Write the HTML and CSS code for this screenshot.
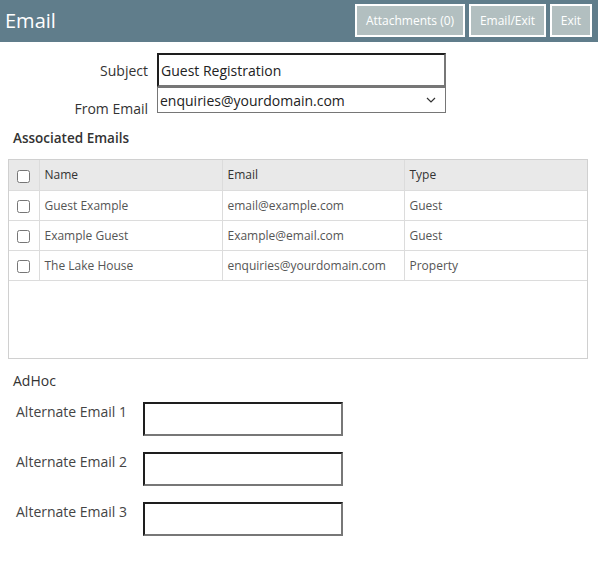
FILE: index.html
```html
<!DOCTYPE html>
<html lang="en">
<head>
    <meta charset="UTF-8">
    <meta name="viewport" content="width=device-width, initial-scale=1.0">
    <title>Email</title>
    <link rel="stylesheet" href="styles.css">
</head>
<body>
    <header class="topbar">
        <h1 class="title">Email</h1>
        <div class="actions">
            <button class="btn btn-attach">Attachments (0)</button>
            <button class="btn btn-send">Email/Exit</button>
            <button class="btn btn-exit">Exit</button>
        </div>
    </header>

    <form class="email-form">
        <div class="field-grid">
            <label class="field-label" for="subject">Subject</label>
            <input type="text" id="subject" class="text-input subject-input" value="Guest Registration">

            <label class="field-label from-label" for="from-email">From Email</label>
            <div class="select-wrap">
                <select id="from-email" class="select-input">
                    <option>enquiries@yourdomain.com</option>
                </select>
                <svg class="chevron" width="10" height="6" viewBox="0 0 10 6">
                    <path d="M1 1 L5 5 L9 1" fill="none" stroke="#333" stroke-width="1.2"/>
                </svg>
            </div>
        </div>

        <h2 class="section-title">Associated Emails</h2>
        <div class="grid-box">
            <table class="email-table">
                <thead>
                    <tr>
                        <th class="col-check"><input type="checkbox"></th>
                        <th class="col-name">Name</th>
                        <th class="col-email">Email</th>
                        <th>Type</th>
                    </tr>
                </thead>
                <tbody>
                    <tr>
                        <td class="col-check"><input type="checkbox"></td>
                        <td>Guest Example</td>
                        <td>email@example.com</td>
                        <td>Guest</td>
                    </tr>
                    <tr>
                        <td class="col-check"><input type="checkbox"></td>
                        <td>Example Guest</td>
                        <td>Example@email.com</td>
                        <td>Guest</td>
                    </tr>
                    <tr>
                        <td class="col-check"><input type="checkbox"></td>
                        <td>The Lake House</td>
                        <td>enquiries@yourdomain.com</td>
                        <td>Property</td>
                    </tr>
                </tbody>
            </table>
        </div>

        <h2 class="section-title adhoc-title">AdHoc</h2>
        <div class="adhoc-list">
            <div class="adhoc-row">
                <label for="alt1">Alternate Email 1</label>
                <input type="text" id="alt1" class="text-input alt-input">
            </div>
            <div class="adhoc-row">
                <label for="alt2">Alternate Email 2</label>
                <input type="text" id="alt2" class="text-input alt-input">
            </div>
            <div class="adhoc-row">
                <label for="alt3">Alternate Email 3</label>
                <input type="text" id="alt3" class="text-input alt-input">
            </div>
        </div>
    </form>
</body>
</html>
```

FILE: styles.css
```css
* {
    margin: 0;
    padding: 0;
    box-sizing: border-box;
    font-family: 'Open Sans', 'Liberation Sans', sans-serif;
}

body {
    background-color: #ffffff;
    color: #333;
}

.topbar {
    height: 42px;
    background-color: #607d8b;
    display: flex;
    justify-content: space-between;
    align-items: center;
    padding: 0 6px 1px 5px;
}

.title {
    color: #ffffff;
    font-size: 20px;
    font-weight: 400;
}

.actions {
    display: flex;
    gap: 4px;
}

.btn {
    height: 33px;
    border: 2px solid #ffffff;
    background-color: #b2bfc0;
    color: #ffffff;
    font-size: 12px;
    cursor: pointer;
}

.btn-attach {
    width: 110px;
}

.btn-send {
    width: 77px;
}

.btn-exit {
    width: 42px;
}

.email-form {
    padding-top: 11px;
}

.field-grid {
    display: grid;
    grid-template-columns: 148px 289px;
    column-gap: 9px;
}

.field-label {
    font-size: 14px;
    text-align: right;
    align-self: center;
    color: #333;
}

.from-label {
    align-self: end;
    margin-bottom: -5px;
}

.text-input {
    border: 2px solid;
    border-color: #1e1e1e #777 #777 #1e1e1e;
    font-size: 14px;
    color: #222;
    outline: none;
}

.subject-input {
    height: 34px;
    padding: 0 2px;
}

.select-wrap {
    position: relative;
}

.select-input {
    appearance: none;
    width: 100%;
    height: 26px;
    border: 1px solid #767676;
    background: #ffffff;
    font-size: 14px;
    color: #222;
    padding: 0 2px;
}

.chevron {
    position: absolute;
    right: 10px;
    top: 10px;
    pointer-events: none;
}

.section-title {
    font-size: 13.5px;
    font-weight: 600;
    color: #333;
    margin: 16px 0 12px 13px;
}

.grid-box {
    margin: 0 10px 0 8px;
    height: 200px;
    border: 1px solid #d0d0d0;
}

.email-table {
    width: 100%;
    border-collapse: collapse;
    font-size: 12px;
}

.email-table th,
.email-table td {
    height: 30px;
    text-align: left;
    padding: 0 0 0 5px;
    border-right: 1px solid #dcdcdc;
    border-bottom: 1px solid #dcdcdc;
    white-space: nowrap;
}

.email-table th:last-child,
.email-table td:last-child {
    border-right: none;
}

.email-table th {
    background-color: #e9e9e9;
    font-weight: 400;
    color: #333;
}

.email-table td {
    color: #555;
}

.email-table .col-check {
    width: 30px;
    padding: 0;
    text-align: center;
}

.email-table .col-check input {
    width: 13px;
    height: 13px;
    vertical-align: middle;
}

.col-name {
    width: 183px;
}

.col-email {
    width: 182px;
}

.adhoc-title {
    font-size: 14px;
    font-weight: 400;
    margin: 12px 0 12px 13px;
}

.adhoc-list {
    display: flex;
    flex-direction: column;
    gap: 16px;
    padding-left: 16px;
}

.adhoc-row {
    display: flex;
    align-items: flex-start;
}

.adhoc-row label {
    width: 127px;
    font-size: 14px;
    color: #444;
}

.alt-input {
    width: 200px;
    height: 34px;
    padding: 0 3px;
}
```
